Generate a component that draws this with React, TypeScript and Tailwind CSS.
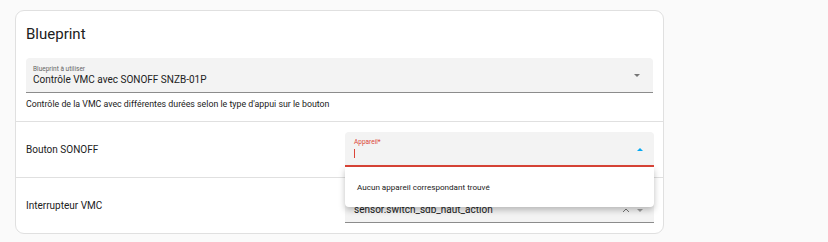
import React from "react";

const font = { fontFamily: "Roboto, 'Noto Sans', sans-serif" };

function Caret({ up, color }: { up?: boolean; color: string }) {
  return (
    <svg width="10" height="10" viewBox="0 0 10 10" className="shrink-0">
      {up ? <path d="M2 7 L5 4 L8 7 Z" fill={color} /> : <path d="M2 4 L5 7 L8 4 Z" fill={color} />}
    </svg>
  );
}

export default function App() {
  return (
    <div className="w-[828px] h-[242px] bg-[#fafafa] pt-[10px] pl-[15px] overflow-hidden" style={font}>
      <div className="relative w-[649px] h-[224px] bg-white border border-[#e0e0e0] rounded-[9px]">
        {/* Header */}
        <div className="px-[10px] pt-[12px] h-[47px] text-[15px] text-[#212121]">Blueprint</div>

        {/* Blueprint select */}
        <div className="mx-[10px] h-[35px] bg-[#f3f3f3] rounded-t-[4px] border-b border-[#8c8c8c] flex items-center justify-between pl-[7px] pr-[11px]">
          <div className="flex flex-col leading-none pt-[1px]">
            <span className="text-[6.5px] text-[#666]">Blueprint à utiliser</span>
            <span className="text-[10px] text-[#212121] mt-[2px]">Contrôle VMC avec SONOFF SNZB-01P</span>
          </div>
          <Caret color="#757575" />
        </div>

        {/* Description */}
        <div className="px-[10px] pt-[5px] h-[28px] text-[8.8px] text-[#212121]">
          Contrôle de la VMC avec différentes durées selon le type d'appui sur le bouton
        </div>

        {/* Row 1 */}
        <div className="border-t border-[#e0e0e0] h-[56px] flex items-center justify-between pl-[10px] pr-[9px]">
          <span className="text-[10px] text-[#212121]">Bouton SONOFF</span>
          <div className="w-[309px] h-[35px] bg-[#f3f3f3] rounded-t-[4px] border-b-2 border-[#db4437] flex items-center justify-between pl-[9px] pr-[9px]">
            <div className="flex flex-col leading-none">
              <span className="text-[6.5px] text-[#db4437]">Appareil*</span>
              <span className="mt-[3px] w-px h-[9px] bg-[#db4437]" />
            </div>
            <Caret up color="#03a9f4" />
          </div>
        </div>

        {/* Row 2 */}
        <div className="border-t border-[#e0e0e0] h-[56px] flex items-center justify-between pl-[10px] pr-[9px]">
          <span className="text-[10px] text-[#212121]">Interrupteur VMC</span>
          <div className="w-[309px] h-[35px] bg-[#f3f3f3] rounded-t-[4px] border-b border-[#8c8c8c] flex items-end justify-between pl-[9px] pr-[9px] pb-[5px]">
            <span className="text-[10px] text-[#212121]">sensor.switch_sdb_haut_action</span>
            <div className="flex items-center gap-[4px] pb-[2px]">
              <svg width="10" height="10" viewBox="0 0 10 10">
                <path d="M2 7 L5 4 L8 7" stroke="#757575" strokeWidth="1" fill="none" />
              </svg>
              <Caret color="#9e9e9e" />
            </div>
          </div>
        </div>

        {/* Dropdown menu */}
        <div className="absolute left-[329px] top-[156px] w-[309px] h-[40px] bg-white rounded-b-[4px] shadow-[0_3px_6px_rgba(0,0,0,0.25)] flex items-center pl-[12px]">
          <span className="text-[8.1px] text-[#212121]">Aucun appareil correspondant trouvé</span>
        </div>
      </div>
    </div>
  );
}
